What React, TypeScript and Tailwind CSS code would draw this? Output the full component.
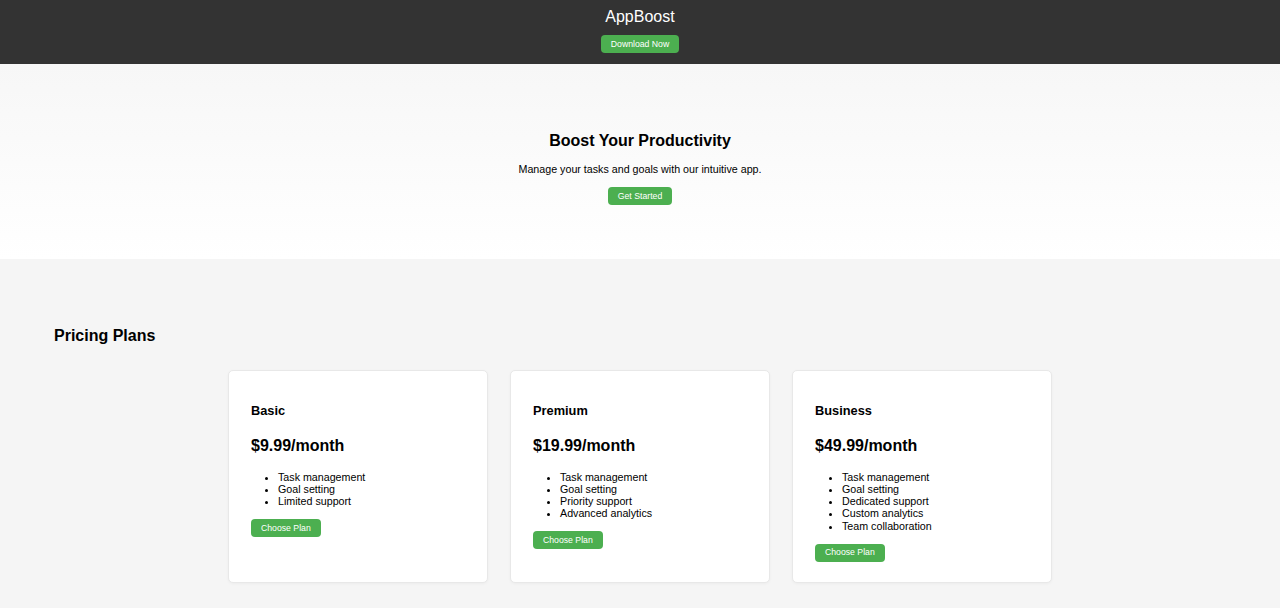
const plans = [
  { name: 'Basic', price: '$9.99/month', features: ['Task management', 'Goal setting', 'Limited support'] },
  {
    name: 'Premium',
    price: '$19.99/month',
    features: ['Task management', 'Goal setting', 'Priority support', 'Advanced analytics'],
  },
  {
    name: 'Business',
    price: '$49.99/month',
    features: ['Task management', 'Goal setting', 'Dedicated support', 'Custom analytics', 'Team collaboration'],
  },
];

function GreenButton({ children }: { children: React.ReactNode }) {
  return (
    <button className="h-[18px] px-[10px] rounded-[4px] bg-[#4caf50] text-white text-[8.7px] leading-none">
      {children}
    </button>
  );
}

export default function App() {
  return (
    <div className="min-h-screen bg-[#f5f5f5] text-black font-['Liberation_Sans',Arial,sans-serif]">
      {/* Header */}
      <header className="h-[64px] bg-[#333333] flex flex-col items-center pt-[8px]">
        <h1 className="text-white text-[16px] leading-[18px]">AppBoost</h1>
        <div className="mt-[9px] flex">
          <GreenButton>Download Now</GreenButton>
        </div>
      </header>

      {/* Hero */}
      <section className="h-[195px] bg-gradient-to-b from-[#f7f7f7] to-white flex flex-col items-center pt-[68px]">
        <h2 className="text-[16px] leading-[18.4px] font-bold">Boost Your Productivity</h2>
        <p className="mt-[12.6px] text-[10.7px] leading-[12.3px]">Manage your tasks and goals with our intuitive app.</p>
        <div className="mt-[11.7px] flex">
          <GreenButton>Get Started</GreenButton>
        </div>
      </section>

      {/* Pricing */}
      <section className="pt-[68px] pb-[26px]">
        <h2 className="pl-[54px] text-[16px] leading-[18.4px] font-bold">Pricing Plans</h2>
        <div className="mt-[25px] flex justify-center gap-[22px]">
          {plans.map((p) => (
            <div
              key={p.name}
              className="w-[260px] bg-white border border-[#e8e8e8] rounded-[5px] px-[22px] pt-[33px] pb-[20px] shadow-[0_1px_3px_rgba(0,0,0,0.04)]"
            >
              <h3 className="text-[12.8px] leading-[14.7px] font-bold">{p.name}</h3>
              <div className="mt-[17.7px] text-[16px] leading-[18.4px] font-bold">{p.price}</div>
              <ul className="mt-[15.6px] pl-[27px] list-disc text-[10.7px] leading-[12.2px]">
                {p.features.map((f) => (
                  <li key={f}>{f}</li>
                ))}
              </ul>
              <div className="mt-[11.7px] flex">
                <GreenButton>Choose Plan</GreenButton>
              </div>
            </div>
          ))}
        </div>
      </section>
    </div>
  );
}
